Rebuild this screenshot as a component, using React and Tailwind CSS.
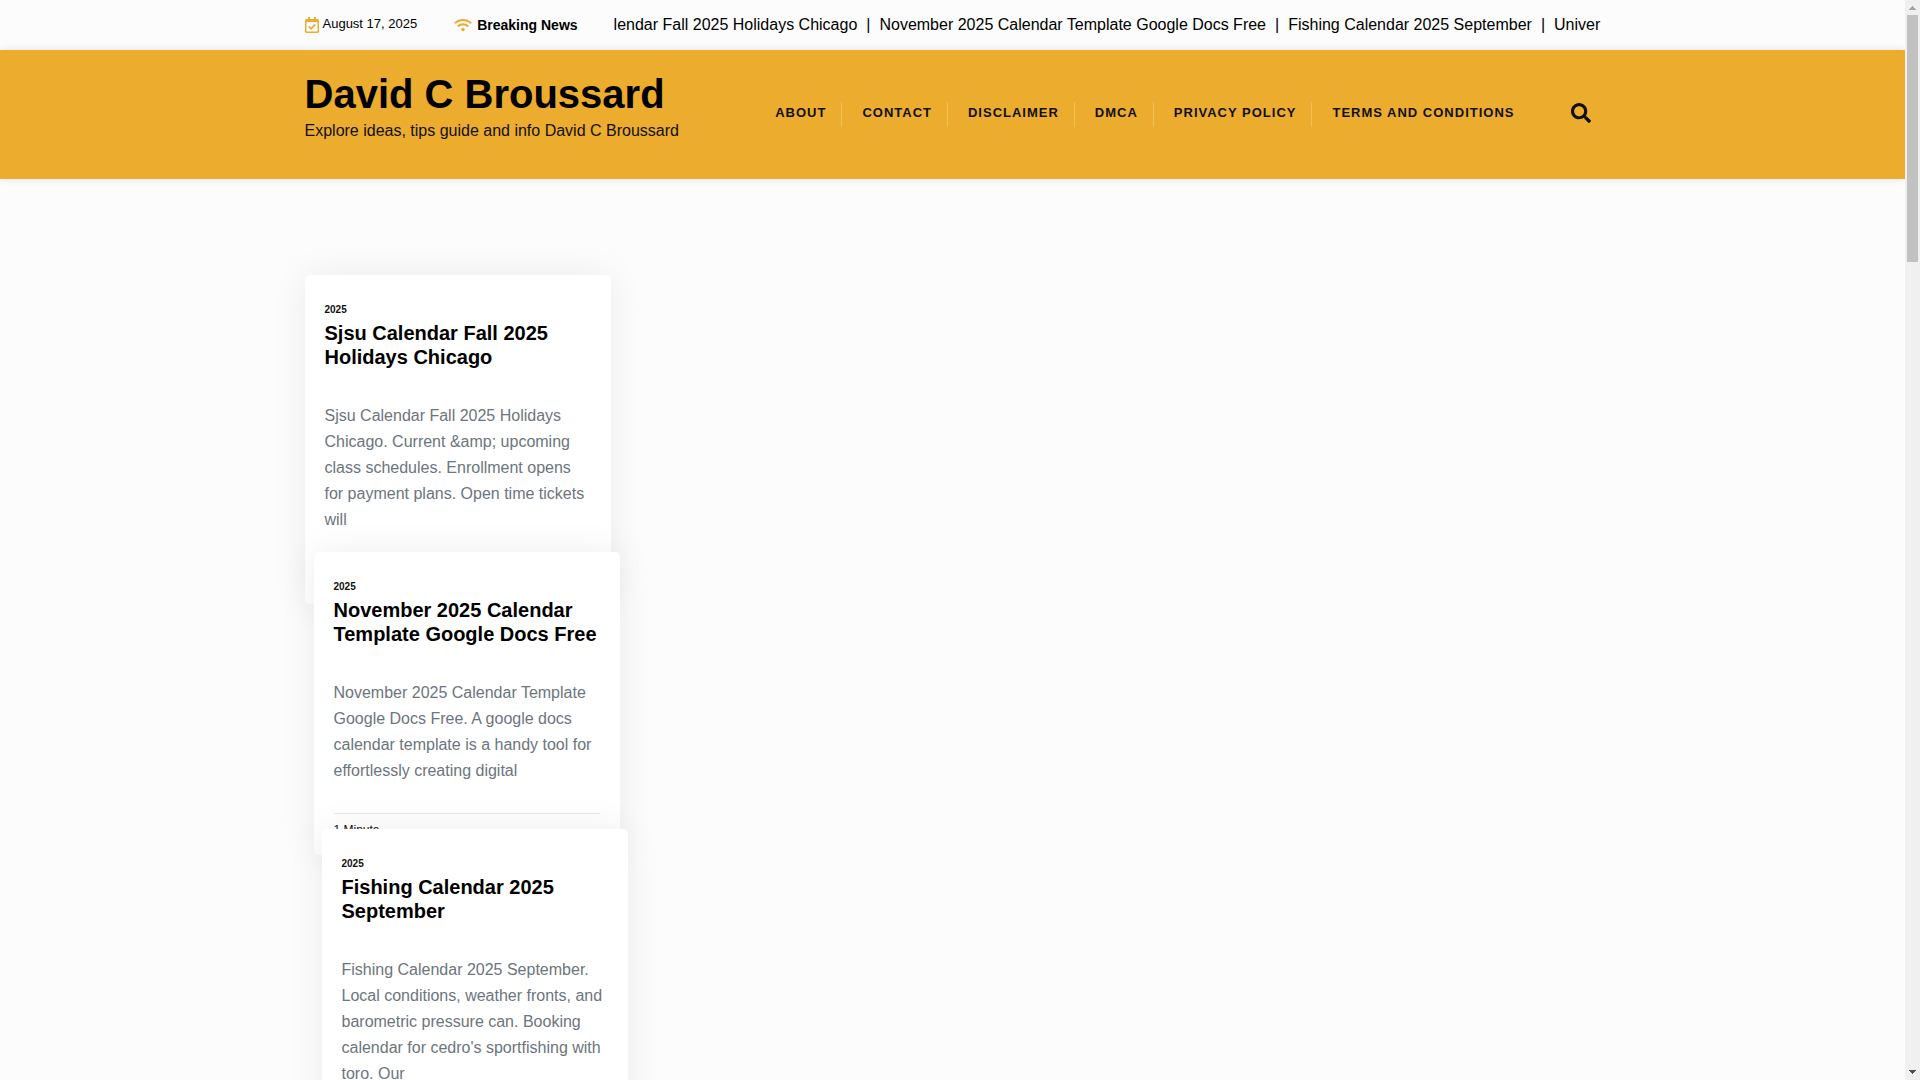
import { FaRegCalendarCheck, FaSearch, FaWifi } from 'react-icons/fa'

const headlines = [
  'lendar Fall 2025 Holidays Chicago',
  'November 2025 Calendar Template Google Docs Free',
  'Fishing Calendar 2025 September',
  'Univer',
]

const menu = ['About', 'Contact', 'Disclaimer', 'DMCA', 'Privacy Policy', 'Terms And Conditions']

const posts = [
  {
    title: 'Sjsu Calendar Fall 2025 Holidays Chicago',
    excerpt:
      'Sjsu Calendar Fall 2025 Holidays Chicago. Current &amp; upcoming class schedules. Enrollment opens for payment plans. Open time tickets will',
    shift: 'ml-0',
  },
  {
    title: 'November 2025 Calendar Template Google Docs Free',
    excerpt:
      'November 2025 Calendar Template Google Docs Free. A google docs calendar template is a handy tool for effortlessly creating digital',
    shift: 'ml-[9px]',
  },
  {
    title: 'Fishing Calendar 2025 September',
    excerpt:
      "Fishing Calendar 2025 September. Local conditions, weather fronts, and barometric pressure can. Booking calendar for cedro's sportfishing with toro. Our",
    shift: 'ml-[17px]',
  },
]

function TopBar() {
  return (
    <div className="shadow-[0_0_8px_rgba(0,0,0,0.1)]">
      <div className="mx-auto flex h-[50px] max-w-[1320px] items-center px-3 pb-px">
        <div className="flex shrink-0 items-center gap-1">
          <FaRegCalendarCheck className="h-4 w-[14px] text-[#ecac2e]" />
          <span className="pb-px text-[13px]">August 17, 2025</span>
        </div>
        <div className="ml-[37px] flex shrink-0 items-center gap-[5px]">
          <FaWifi className="h-[14px] w-[18px] text-[#ecac2e]" />
          <span className="text-sm font-bold">Breaking News</span>
        </div>
        <div className="ml-9 min-w-0 flex-1 overflow-hidden">
          <ul className="flex whitespace-nowrap">
            {headlines.map((text, i) => (
              <li key={text}>
                {i > 0 && <span className="px-[9px]">|</span>}
                <a href="#">{text}</a>
              </li>
            ))}
          </ul>
        </div>
      </div>
    </div>
  )
}

function Header() {
  return (
    <header className="relative bg-[#ecac2e] shadow-[0_0_8px_rgba(0,0,0,0.1)]">
      <div className="mx-auto flex max-w-[1320px] items-center px-3">
        <div className="shrink-0 pt-5 pb-9">
          <h1 className="text-[40px] leading-[48px] font-bold">
            <a href="#">David C Broussard</a>
          </h1>
          <p className="text-base leading-[25px] text-[#101010]">Explore ideas, tips guide and info David C Broussard</p>
        </div>
        <nav className="ml-auto">
          <ul className="flex divide-x divide-[#f1c05c]">
            {menu.map((item) => (
              <li key={item} className="pr-[15px] pl-5 last:pr-0">
                <a href="#" className="block pb-[3px] text-[13px] leading-[22px] font-bold tracking-[1px] text-[#101010] uppercase">
                  {item}
                </a>
              </li>
            ))}
          </ul>
        </nav>
        <button type="button" aria-label="Search" className="mr-2.5 ml-14 pb-1 text-[#101010]">
          <FaSearch className="size-5" />
        </button>
      </div>
    </header>
  )
}

function PostCard({ title, excerpt, shift }) {
  return (
    <article className={`${shift} w-[306px] rounded-[5px] bg-white px-5 pt-[27px] pb-[17px] shadow-[0_0_36px_rgba(0,0,0,0.07)]`}>
      <a href="#" className="block text-[10px] leading-4 font-bold text-[#101010]">2025</a>
      <h2 className="mt-[3px] text-xl leading-6 font-bold">
        <a href="#">{title}</a>
      </h2>
      <p className="mt-[34px] leading-[26px] text-[#6c757d]">{excerpt}</p>
      <div className="mt-[29px] border-t border-[#e8e8e8] pt-2 text-xs leading-4 text-[#101010]">1 Minute</div>
    </article>
  )
}

function Scrollbar() {
  return (
    <div className="flex w-[15px] shrink-0 flex-col items-center bg-[#f0f0f0]" aria-hidden="true">
      <svg className="h-[15px] w-[15px] shrink-0" viewBox="0 0 15 15" shapeRendering="crispEdges">
        <path d="M4 10h7L7.500 6z" fill="#a3a3a3" />
      </svg>
      <div className="h-[247px] w-[11px] bg-[#c1c1c1]" />
      <svg className="mt-auto h-[15px] w-[15px] shrink-0" viewBox="0 0 15 15" shapeRendering="crispEdges">
        <path d="M4 5h7L7.500 9z" fill="#505050" />
      </svg>
    </div>
  )
}

function App() {
  return (
    <div className="flex h-screen overflow-hidden bg-[#fcfcfc] font-['Liberation_Sans',Arial,sans-serif] text-base text-black">
      <div className="min-w-0 flex-1 overflow-hidden">
        <TopBar />
        <Header />
        {/* rows are shorter than the cards, so each card covers the foot of the one before */}
        <main className="mx-auto grid max-w-[1320px] auto-rows-[277px] items-start px-3 pt-24">
          {posts.map((post) => (
            <PostCard key={post.title} {...post} />
          ))}
        </main>
      </div>
      <Scrollbar />
    </div>
  )
}

export default App
